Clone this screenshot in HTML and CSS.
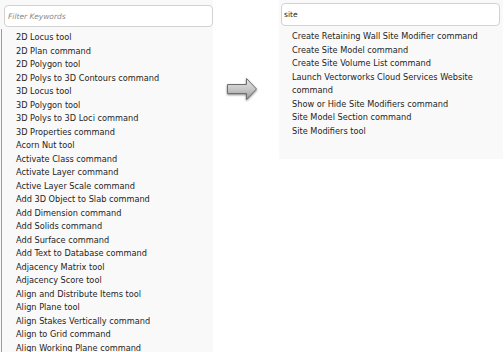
FILE: index.html
```html
<!DOCTYPE html>
<html lang="en">
<head>
    <meta charset="UTF-8">
    <meta name="viewport" content="width=device-width, initial-scale=1.0">
    <title>Command Search</title>
    <link rel="stylesheet" href="styles.css">
</head>
<body>
    <div class="page">
        <div class="panel panel-all">
            <div class="search">
                <input type="text" class="search-box" placeholder="Filter Keywords">
            </div>
            <ul class="results results-all">
                <li>2D Locus tool</li>
                <li>2D Plan command</li>
                <li>2D Polygon tool</li>
                <li>2D Polys to 3D Contours command</li>
                <li>3D Locus tool</li>
                <li>3D Polygon tool</li>
                <li>3D Polys to 3D Loci command</li>
                <li>3D Properties command</li>
                <li>Acorn Nut tool</li>
                <li>Activate Class command</li>
                <li>Activate Layer command</li>
                <li>Active Layer Scale command</li>
                <li>Add 3D Object to Slab command</li>
                <li>Add Dimension command</li>
                <li>Add Solids command</li>
                <li>Add Surface command</li>
                <li>Add Text to Database command</li>
                <li>Adjacency Matrix tool</li>
                <li>Adjacency Score tool</li>
                <li>Align and Distribute Items tool</li>
                <li>Align Plane tool</li>
                <li>Align Stakes Vertically command</li>
                <li>Align to Grid command</li>
                <li>Align Working Plane command</li>
            </ul>
        </div>

        <div class="arrow">
            <svg width="34" height="26" viewBox="0 0 34 26">
                <defs>
                    <linearGradient id="arrowFill" x1="0" y1="0" x2="0" y2="1">
                        <stop offset="0" stop-color="#e4e4e4"/>
                        <stop offset="0.5" stop-color="#c8c8c8"/>
                        <stop offset="1" stop-color="#9a9a9a"/>
                    </linearGradient>
                    <filter id="arrowShadow" x="-20%" y="-20%" width="140%" height="140%">
                        <feGaussianBlur in="SourceAlpha" stdDeviation="1"/>
                        <feOffset dx="0" dy="0.5"/>
                        <feComponentTransfer><feFuncA type="linear" slope="0.5"/></feComponentTransfer>
                        <feMerge><feMergeNode/><feMergeNode in="SourceGraphic"/></feMerge>
                    </filter>
                </defs>
                <path d="M2.5 7.5 H21.5 V1.5 L31.5 12 L21.5 22.5 V16.5 H2.5 Z" fill="url(#arrowFill)" stroke="#6e6e6e" stroke-width="1" filter="url(#arrowShadow)"/>
            </svg>
        </div>

        <div class="panel panel-found">
            <div class="search">
                <input type="text" class="search-box search-filled" value="site">
            </div>
            <ul class="results results-found">
                <li>Create Retaining Wall Site Modifier command</li>
                <li>Create Site Model command</li>
                <li>Create Site Volume List command</li>
                <li>Launch Vectorworks Cloud Services Website command</li>
                <li>Show or Hide Site Modifiers command</li>
                <li>Site Model Section command</li>
                <li>Site Modifiers tool</li>
            </ul>
        </div>
    </div>
</body>
</html>
```

FILE: styles.css
```css
body {
    margin: 0;
    background: #fff;
    font-family: "DejaVu Sans", sans-serif;
    color: #1e1e1e;
}
.page {
    display: flex;
    align-items: flex-start;
    height: 352px;
    overflow: hidden;
}
.panel {
    background: #f9f9f9;
}
.panel-all {
    width: 213px;
    height: 352px;
}
.panel-all .search {
    padding: 5px 0 2px 4px;
}
.panel-found {
    width: 224px;
    height: 159px;
}
.panel-found .search {
    padding: 3px 3px 2px 2px;
}
.search-box {
    display: block;
    box-sizing: border-box;
    width: 100%;
    height: 22px;
    padding: 0 3px;
    border: 1px solid #d2d2d2;
    border-radius: 4px;
    background: #fff;
    font-family: "DejaVu Sans", sans-serif;
    font-size: 7.5px;
    color: #1e1e1e;
    outline: none;
}
.panel-found .search-box {
    height: 23px;
    padding: 0 2px;
}
.search-box::placeholder {
    font-style: italic;
    color: #8a8a8a;
}
.results {
    list-style: none;
    margin: 0;
    font-size: 8.2px;
    line-height: 13.5px;
}
.results-all {
    margin-left: 1px;
    border-left: 1px solid #9c9c9c;
    padding: 2px 0 0 14px;
    height: 330px;
}
.results-found {
    padding: 2px 21px 0 13px;
}
.arrow {
    margin-top: 77px;
    margin-left: 12px;
    width: 34px;
    height: 26px;
}
.arrow + .panel-found {
    margin-left: 20px;
}
```
